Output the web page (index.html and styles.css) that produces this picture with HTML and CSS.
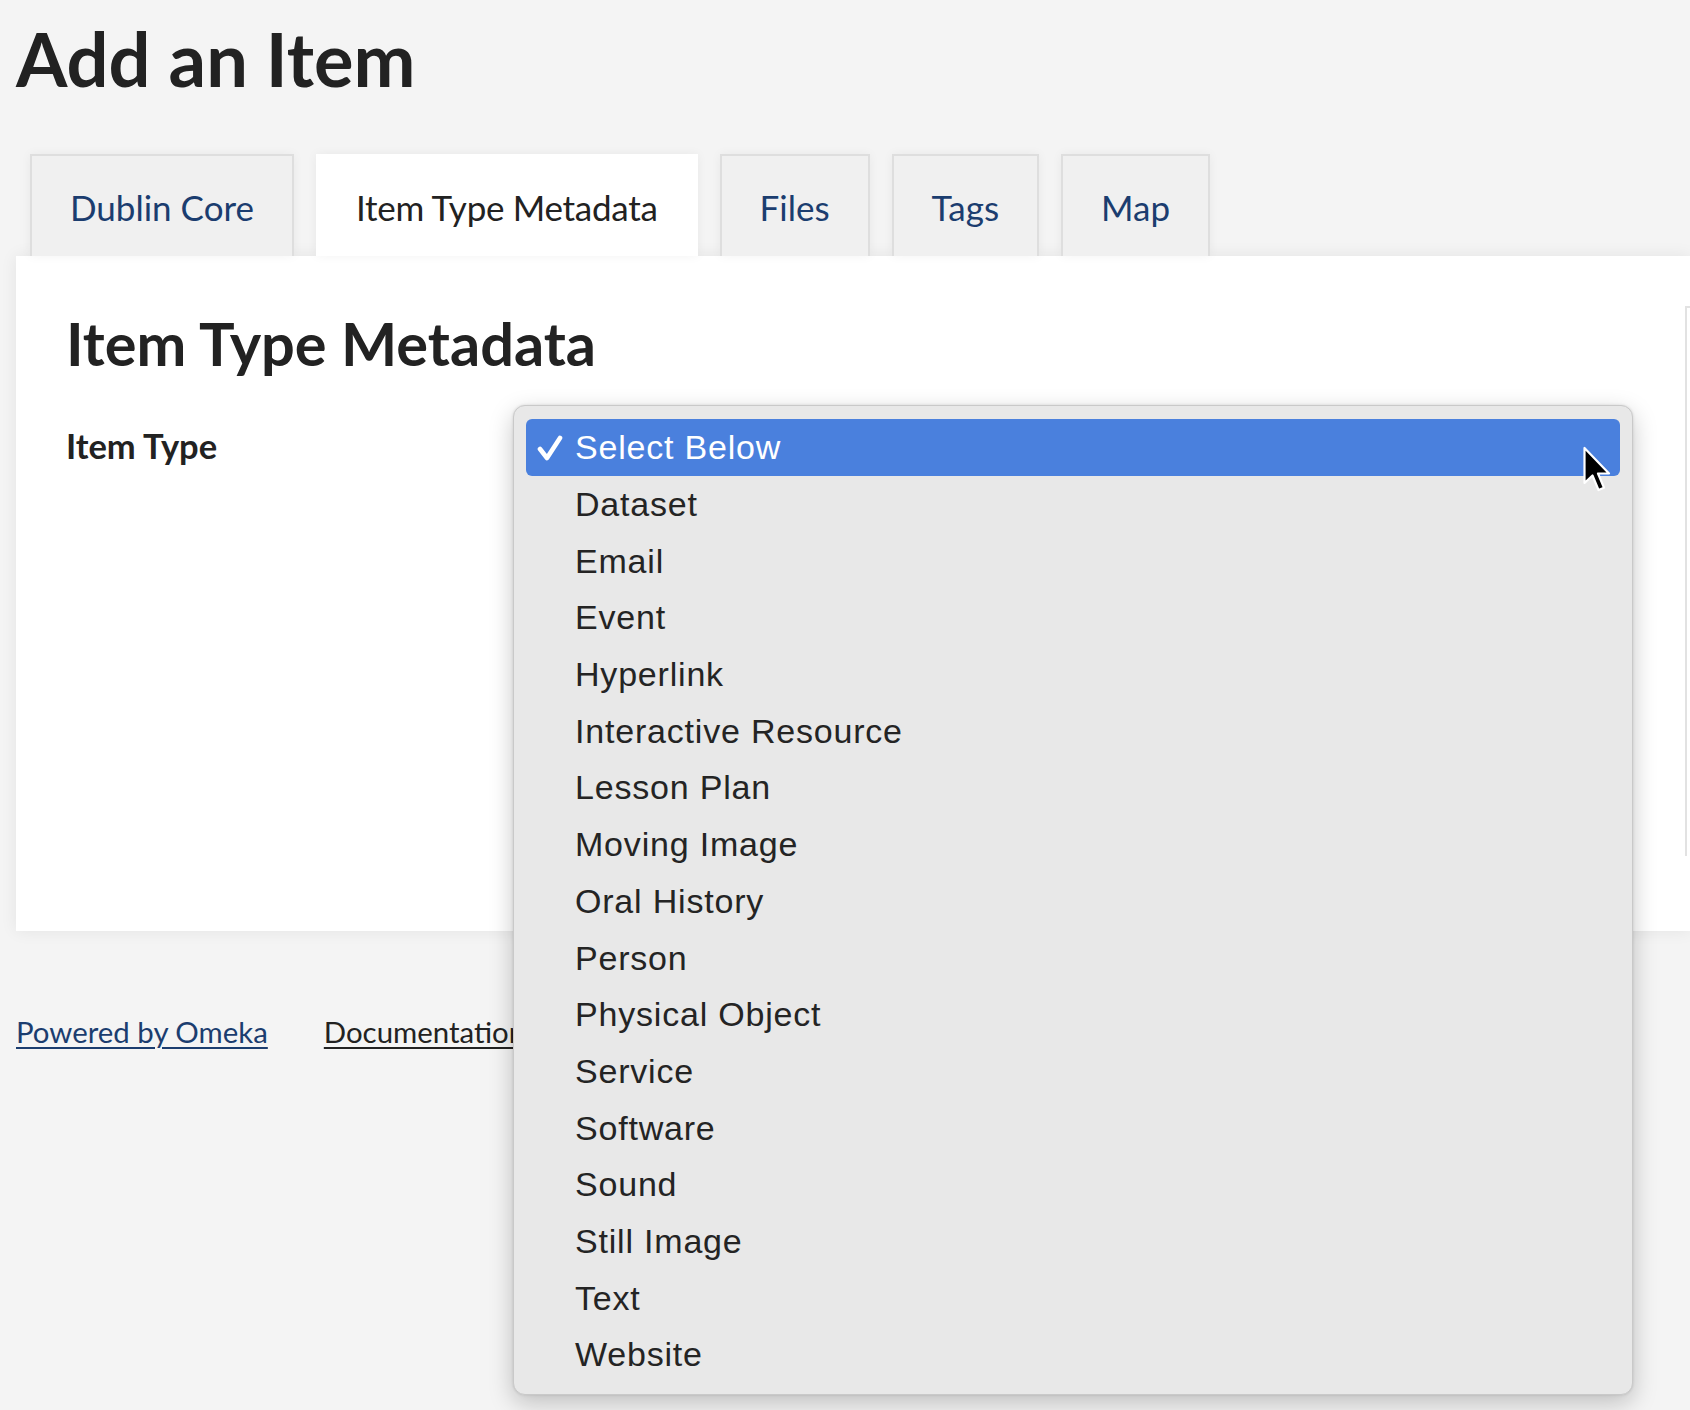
FILE: index.html
```html
<!DOCTYPE html>
<html lang="en">
<head>
<meta charset="utf-8">
<title>Add an Item</title>
<link rel="stylesheet" href="styles.css">
</head>
<body>
<div class="page">
  <h1 class="title">Add an Item</h1>
  <ul class="tabs">
    <li class="tab"><a href="#">Dublin Core</a></li>
    <li class="tab active"><span>Item Type Metadata</span></li>
    <li class="tab"><a href="#">Files</a></li>
    <li class="tab"><a href="#">Tags</a></li>
    <li class="tab"><a href="#">Map</a></li>
  </ul>
  <section class="panel">
    <div class="panel-main">
      <h2 class="section-title">Item Type Metadata</h2>
      <div class="field">
        <label class="field-label">Item Type</label>
      </div>
    </div>
    <aside class="side"></aside>
  </section>
  <footer class="footer">
    <a class="foot-link blue" href="#">Powered by Omeka</a>
    <a class="foot-link dark" href="#">Documentation</a>
  </footer>
</div>

<div class="popup">
  <div class="opt selected"><span class="check-slot"><svg class="check" viewBox="0 0 26 26" width="26" height="26"><polyline points="3,14 10,23 23,3" fill="none" stroke="#fff" stroke-width="4.6" stroke-linecap="round" stroke-linejoin="round"/></svg></span>Select Below</div>
  <div class="opt">Dataset</div>
  <div class="opt">Email</div>
  <div class="opt">Event</div>
  <div class="opt">Hyperlink</div>
  <div class="opt">Interactive Resource</div>
  <div class="opt">Lesson Plan</div>
  <div class="opt">Moving Image</div>
  <div class="opt">Oral History</div>
  <div class="opt">Person</div>
  <div class="opt">Physical Object</div>
  <div class="opt">Service</div>
  <div class="opt">Software</div>
  <div class="opt">Sound</div>
  <div class="opt">Still Image</div>
  <div class="opt">Text</div>
  <div class="opt">Website</div>
</div>

<svg class="cursor" viewBox="0 0 30 48" width="30" height="48">
  <path d="M2.5 2 L2.5 37 L10.5 29.5 L16.5 44 L22 41.7 L16 27.5 L27 27.5 Z" fill="#000" stroke="#fff" stroke-width="2.2" stroke-linejoin="round"/>
</svg>
</body>
</html>
```

FILE: styles.css
```css
html, body {
  margin: 0;
  padding: 0;
  overflow: hidden;
}

body {
  background: #f4f4f4;
  font-family: Lato, "Open Sans", sans-serif;
  color: #222;
  width: 1690px;
  height: 1410px;
  position: relative;
}

.page {
  padding-left: 16px;
}

.title {
  margin: 15px 0 0 0;
  font-size: 74px;
  line-height: 1.2;
  font-weight: 700;
  color: #222;
}

.tabs {
  list-style: none;
  margin: 50px 0 0 0;
  padding: 0 0 0 14px;
  display: flex;
  gap: 22px;
}

.tab {
  position: relative;
  z-index: 2;
  background: #f0f0f0;
  border: 2px solid #dedede;
  border-bottom: none;
  padding: 30px 38px 28px 38px;
  font-size: 35px;
  line-height: 42px;
  box-shadow: 0 0 10px rgba(0, 0, 0, 0.05);
}

.tab a {
  color: #1b3d6f;
  text-decoration: none;
}

.tab.active {
  background: #fff;
  border-color: #fff;
  color: #222;
  letter-spacing: -0.28px;
}

.panel {
  position: relative;
  z-index: 1;
  background: #fff;
  min-height: 675px;
  box-sizing: border-box;
  display: flex;
  box-shadow: 0 0 16px rgba(0, 0, 0, 0.07);
}

.panel-main {
  flex: 1;
  padding: 52px 0 0 50px;
}

.section-title {
  margin: 0;
  font-size: 59.5px;
  line-height: 1.2;
  font-weight: 700;
  color: #222;
}

.field {
  margin-top: 46px;
  display: flex;
}

.field-label {
  font-size: 34.5px;
  line-height: 1.2;
  font-weight: 700;
  color: #222;
}

.side {
  width: 3px;
  margin-top: 50px;
  height: 548px;
  border-left: 2px solid #e2e2e2;
  border-top: 2px solid #e2e2e2;
}

.footer {
  margin-top: 83px;
  display: flex;
  gap: 56px;
  font-size: 29.4px;
  line-height: 1.2;
}

.foot-link {
  text-decoration: underline;
  text-underline-offset: 4px;
  text-decoration-thickness: 2px;
}

.foot-link.blue {
  color: #1b3d6f;
}

.foot-link.dark {
  color: #222;
}

.popup {
  position: absolute;
  left: 513px;
  top: 405px;
  width: 1120px;
  box-sizing: border-box;
  padding: 13px 12px 11px 12px;
  background: #e8e8e8;
  border: 1px solid #c9c9c9;
  border-radius: 12px;
  box-shadow: 0 8px 24px rgba(0, 0, 0, 0.22), 0 0 3px rgba(0, 0, 0, 0.12);
  z-index: 5;
  font-family: "Liberation Sans", Arial, sans-serif;
  font-size: 34px;
  letter-spacing: 0.8px;
  color: #242424;
}

.opt {
  height: 56.7px;
  line-height: 56.7px;
  padding-left: 49px;
  white-space: nowrap;
}

.opt.selected {
  display: flex;
  align-items: center;
  padding-left: 0;
  height: 57px;
  line-height: 57px;
  background: #4a80dd;
  color: #fff;
  border-radius: 6px;
}

.check-slot {
  width: 49px;
  display: flex;
  align-items: center;
  padding-left: 11px;
  box-sizing: border-box;
}

.check {
  display: block;
}

.cursor {
  position: absolute;
  left: 1582px;
  top: 446px;
  z-index: 10;
}
```
